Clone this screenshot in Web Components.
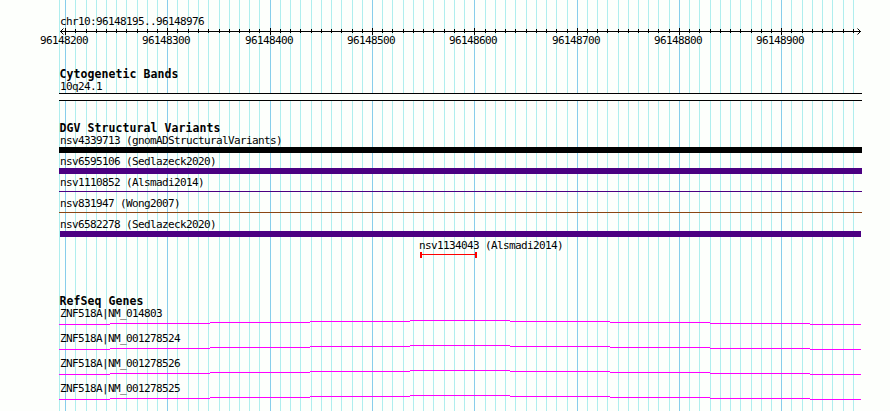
<!DOCTYPE html>
<html lang="en">
<head>
<meta charset="utf-8">
<title>chr10:96148195..96148976</title>
<style>
    body { margin: 0; background: #fdfffc; }
</style>
</head>
<body>
<genome-view>
    <genome-ruler label="chr10:96148195..96148976"></genome-ruler>
    <track-section heading="Cytogenetic Bands" style="margin-top: 22px">
        <feature-row label="10q24.1" type="band"></feature-row>
    </track-section>
    <track-section heading="DGV Structural Variants" style="margin-top: 21px">
        <feature-row label="nsv4339713 (gnomADStructuralVariants)" type="bar" color="#000"></feature-row>
        <feature-row label="nsv6595106 (Sedlazeck2020)" type="bar" color="#4b0082"></feature-row>
        <feature-row label="nsv1110852 (Alsmadi2014)" type="line" color="#4b0082"></feature-row>
        <feature-row label="nsv831947 (Wong2007)" type="line" color="#8b4513"></feature-row>
        <feature-row label="nsv6582278 (Sedlazeck2020)" type="bar" color="#4b0082" from="1" to="802"></feature-row>
        <feature-row label="nsv1134043 (Alsmadi2014)" type="span" color="#f00" from="361" to="418"></feature-row>
    </track-section>
    <track-section heading="RefSeq Genes" style="margin-top: 35px">
        <feature-row label="ZNF518A|NM_014803" type="gene"></feature-row>
        <feature-row label="ZNF518A|NM_001278524" type="gene"></feature-row>
        <feature-row label="ZNF518A|NM_001278526" type="gene"></feature-row>
        <feature-row label="ZNF518A|NM_001278525" type="gene"></feature-row>
    </track-section>
</genome-view>

<script>
// grid lines in px from the left edge of the panel, every 10 bp starting at 96148200
const GRID = [
    6, 16, 27, 37, 47, 57, 67, 78, 88, 98,
    108, 118, 129, 139, 149, 160, 170, 180, 190, 200,
    211, 221, 231, 241, 252, 262, 272, 282, 293, 303,
    313, 323, 333, 344, 354, 364, 374, 385, 395, 405,
    415, 426, 436, 446, 456, 467, 477, 487, 497, 508,
    518, 528, 538, 548, 559, 569, 579, 589, 599, 610,
    620, 630, 640, 651, 661, 671, 681, 692, 702, 712,
    722, 732, 743, 753, 763, 773, 784, 794
];
const FIRST = 96148200;
const WIDTH = 803;

const rect = (x, y, w, h, fill) => `<rect x="${x}" y="${y}" width="${w}" height="${h}" fill="${fill}"/>`;

const viewTemplate = document.createElement('template');
viewTemplate.innerHTML = `
    <style>
        :host {
            display: block;
            position: relative;
            box-sizing: border-box;
            width: 890px;
            height: 411px;
            padding: 15px 28px 0 59px;
            overflow: hidden;
            background: #fdfffc;
            color: #000;
            font: 11px/12px "DejaVu Sans Mono", monospace;
            letter-spacing: -0.622px;
        }
        .grid {
            position: absolute;
            left: 59px;
            top: 0;
        }
        .tracks {
            position: relative;
            display: flex;
            flex-direction: column;
        }
    </style>
    <svg class="grid" width="${WIDTH}" height="411" shape-rendering="crispEdges"></svg>
    <div class="tracks"><slot></slot></div>
`;

class GenomeView extends HTMLElement {
    constructor() {
        super();
        this.attachShadow({ mode: 'open' });
        this.shadowRoot.appendChild(viewTemplate.content.cloneNode(true));
        this.shadowRoot.querySelector('.grid').innerHTML = rect(0, 0, 1, 411, '#afeeee') +
            GRID.map((x, i) => rect(x, 0, 1, 411, i % 10 ? '#afeeee' : '#87ceeb')).join('');
    }
}

class GenomeRuler extends HTMLElement {
    connectedCallback() {
        if (!this.shadowRoot) this.attachShadow({ mode: 'open' });
        const ticks = GRID.map((x, i) => i % 10 ? rect(x, 14, 1, 4, '#000') : rect(x, 13, 1, 7, '#000')).join('');
        const numbers = GRID.filter((x, i) => i % 10 === 0)
            .map((x, i) => `<text x="${x - 25}" y="29">${FIRST + i * 100}</text>`).join('');
        this.shadowRoot.innerHTML = `
            <style>
                :host { display: block; height: 31px; }
                .title { padding-left: 1px; height: 12px; line-height: 14px; }
                svg { display: block; overflow: visible; margin-top: -12px; }
            </style>
            <div class="title">${this.getAttribute('label')}</div>
            <svg width="${WIDTH}" height="31">
                <g shape-rendering="crispEdges">${rect(1, 16, 801, 1, '#000')}${ticks}</g>
                <path d="M4.5 13.5 1.5 16.5 4.5 19.5M798.5 13.5 801.5 16.5 798.5 19.5" fill="none" stroke="#000"/>
                ${numbers}
            </svg>
        `;
    }
}

class TrackSection extends HTMLElement {
    connectedCallback() {
        if (!this.shadowRoot) this.attachShadow({ mode: 'open' });
        this.shadowRoot.innerHTML = `
            <style>
                :host { display: flex; flex-direction: column; }
                .heading {
                    height: 12px;
                    padding-left: 0.5px;
                    font-size: 11.5px;
                    font-weight: bold;
                    letter-spacing: 0.077px;
                }
            </style>
            <div class="heading">${this.getAttribute('heading')}</div>
            <slot></slot>
        `;
    }
}

class FeatureRow extends HTMLElement {
    connectedCallback() {
        if (!this.shadowRoot) this.attachShadow({ mode: 'open' });
        const type = this.getAttribute('type');
        const color = this.getAttribute('color');
        const from = Number(this.getAttribute('from') || 0);
        const to = Number(this.getAttribute('to') || WIDTH);
        const height = type === 'gene' ? 25 : 21;
        this.shadowRoot.innerHTML = `
            <style>
                :host { display: block; height: ${height}px; }
                .label { height: 12px; line-height: 14px; padding-left: ${type === 'span' ? from - 1 : 1}px; }
                svg { display: block; }
            </style>
            <div class="label">${this.getAttribute('label')}</div>
            <svg width="${WIDTH}" height="${height - 12}" shape-rendering="crispEdges">${this.glyph(type, color, from, to)}</svg>
        `;
    }

    glyph(type, color, from, to) {
        const w = to - from;
        if (type === 'band') {
            return rect(0, 1, w, 8, '#000') + rect(0, 2, w, 6, '#fdfffc');
        }
        if (type === 'bar') {
            return rect(from, 1, w, 6, color);
        }
        if (type === 'line') {
            return rect(from, 3, w, 1, color);
        }
        if (type === 'span') {
            return rect(from, 3, w, 1, color) + rect(from, 1, 2, 6, color) + rect(to - 2, 1, 2, 6, color);
        }
        // intron drawn as a shallow peak, one pixel per step
        const stops = [0, 51, 151, 251, 351, 451, 551, 651, 751, 802];
        return stops.slice(1).map((end, i) =>
            rect(stops[i], 1 + Math.abs(i - 4), end - stops[i], 1, '#f0f')).join('');
    }
}

window.customElements.define('genome-view', GenomeView);
window.customElements.define('genome-ruler', GenomeRuler);
window.customElements.define('track-section', TrackSection);
window.customElements.define('feature-row', FeatureRow);
</script>
</body>
</html>
